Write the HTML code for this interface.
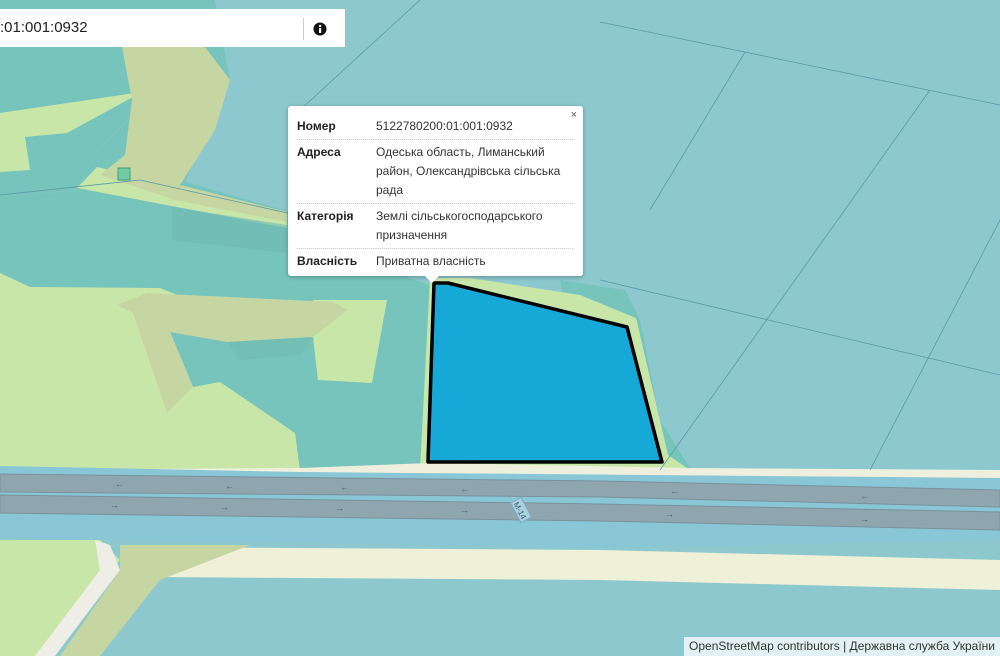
<!DOCTYPE html>
<html><head><meta charset="utf-8"><style>
html,body{margin:0;padding:0;width:1000px;height:656px;overflow:hidden;font-family:"Liberation Sans",sans-serif;}
#map{position:absolute;left:0;top:0;}
.search{position:absolute;left:0;top:9px;width:345px;height:38px;background:#fff;}
.search span{position:absolute;left:0;top:10px;font-size:15px;color:#222;}
.search .sep{position:absolute;left:303px;top:9px;width:1px;height:22px;background:#ccc;}
.pop{position:absolute;left:288px;top:106px;width:295px;height:170px;background:#fff;border-radius:3px;box-shadow:0 1px 4px rgba(0,0,0,.3);font-size:12px;color:#333;}
.pop table{position:absolute;left:9px;top:8px;width:276px;border-collapse:collapse;}
.pop td{padding:3px 0 3px 0;line-height:19px;vertical-align:top;border-bottom:1px dotted #ccc;}
.pop tr:last-child td{border-bottom:none;}
.pop td.k{font-weight:bold;width:79px;color:#222;}
.pop .x{position:absolute;right:6px;top:3px;font-size:11px;color:#555;}
.tip{position:absolute;left:424px;top:275px;width:0;height:0;border-left:8px solid transparent;border-right:8px solid transparent;border-top:8px solid #fff;}
.attr{position:absolute;right:0;bottom:0;background:rgba(255,255,255,.75);font-size:12px;color:#333;padding:2px 5px;height:15px;line-height:15px;white-space:nowrap;}
</style></head><body>
<svg id="map" width="1000" height="656" viewBox="0 0 1000 656">
<rect width="1000" height="656" fill="#8cc8cd"/>
<polygon points="0,0 215,0 230,80 185,182 290,212 300,240 430,285 428,470 0,470" fill="#77c4bd"/>
<polygon points="0,113 135,93 152,100 132,117 100,147 77,190 0,197" fill="#c9e6a9"/>
<polygon points="25,137 67,133 133,97 152,100 132,117 100,147 77,190 0,197 0,172 30,170" fill="#77c4bd"/>
<polygon points="77,188 97,167 287,212 287,228" fill="#c9e6a9"/>
<polygon points="122,47 205,47 230,80 215,130 180,185 287,212 287,222 175,200 100,175 125,155 132,100" fill="#c6d6a2"/>
<polygon points="172,207 287,225 287,253 172,240" fill="#6fb9b0" opacity="0.6"/>
<polygon points="0,273 30,287 160,288 190,300 170,332 193,387 220,382 295,433 300,470 0,470" fill="#c9e6a9"/>
<polygon points="313,300 387,300 372,383 318,380 313,337" fill="#c9e6a9"/>
<polygon points="117,305 147,293 187,295 333,302 348,310 313,337 227,342 170,332 193,387 167,413 133,313" fill="#c6d6a2"/>
<polygon points="227,342 313,337 300,355 240,360" fill="#6fb9b0" opacity="0.5"/>
<!-- parcel surround -->
<polygon points="560,280 625,290 640,320 660,420 690,468 600,470" fill="#77c4bd"/>
<polygon points="430,278 470,278 580,295 636,318 668,455 690,470 420,470" fill="#c9e6a9"/>
<polygon points="300,468 430,463 690,468 1000,470 1000,480 0,470" fill="#eef0dd"/>
<polygon points="0,466 300,472 1000,478 1000,540 600,548 0,538" fill="#89c6d6"/>
<polygon points="0,474 600,481 1000,490 1000,507 600,497 0,492" fill="#8fa6ae" stroke="#7a919a" stroke-width="1"/>
<polygon points="0,495 600,504 1000,512 1000,530 600,521 0,513" fill="#8fa6ae" stroke="#7a919a" stroke-width="1"/>
<g fill="#4b5d66" font-size="9">
<text x="115" y="487">←</text><text x="225" y="489">←</text><text x="340" y="490">←</text><text x="460" y="492">←</text><text x="670" y="494">←</text><text x="860" y="499">←</text>
<text x="110" y="508">→</text><text x="220" y="510">→</text><text x="335" y="511">→</text><text x="460" y="513">→</text><text x="665" y="517">→</text><text x="860" y="522">→</text>
</g>
<g transform="translate(521,510) rotate(62)"><rect x="-11" y="-6" width="22" height="12" fill="#a9cfe0" stroke="#7fa9c0"/><text x="0" y="4" font-size="8" text-anchor="middle" fill="#3c5e70">M-14</text></g>
<polygon points="150,547 600,550 1000,560 1000,590 600,580 150,577" fill="#eef0d7"/>
<polygon points="0,540 100,540 120,560 40,656 0,656" fill="#c9e6a9"/>
<polygon points="95,540 110,545 120,570 55,656 35,656 100,570" fill="#eeeee6"/>
<polygon points="120,545 250,545 160,580 100,656 60,656 120,570" fill="#c6d6a2"/>
<g stroke="#5a9aa8" stroke-width="0.8" fill="none">
<line x1="600" y1="22" x2="1000" y2="105"/><line x1="420" y1="0" x2="300" y2="110"/><line x1="745" y1="52" x2="650" y2="210"/>
<line x1="930" y1="90" x2="660" y2="470"/><line x1="1000" y1="220" x2="870" y2="470"/>
<line x1="0" y1="195" x2="140" y2="180"/><line x1="140" y1="180" x2="430" y2="245"/>
<line x1="600" y1="280" x2="1000" y2="375"/>
</g>
<rect x="118" y="168" width="12" height="12" fill="#6fcca4" stroke="#4a9a80"/>
<polygon points="434,283 448,283 627,327 662,462 428,462" fill="#16a9d8" stroke="#000" stroke-width="3.5" stroke-linejoin="round"/>
</svg>
<div class="search"><span>:01:001:0932</span><div class="sep"></div>
<svg style="position:absolute;left:313px;top:13px" width="14" height="14" viewBox="0 0 14 14"><circle cx="7" cy="7" r="6.5" fill="#111"/><rect x="6" y="6" width="2.2" height="5" fill="#fff"/><circle cx="7.1" cy="4" r="1.2" fill="#fff"/></svg></div>
<div class="pop"><span class="x">×</span>
<table>
<tr><td class="k">Номер</td><td>5122780200:01:001:0932</td></tr>
<tr><td class="k">Адреса</td><td>Одеська область, Лиманський район, Олександрівська сільська рада</td></tr>
<tr><td class="k">Категорія</td><td>Землі сільськогосподарського призначення</td></tr>
<tr><td class="k">Власність</td><td>Приватна власність</td></tr>
</table></div>
<div class="tip"></div>
<div class="attr">OpenStreetMap contributors | Державна служба України</div>
</body></html>
